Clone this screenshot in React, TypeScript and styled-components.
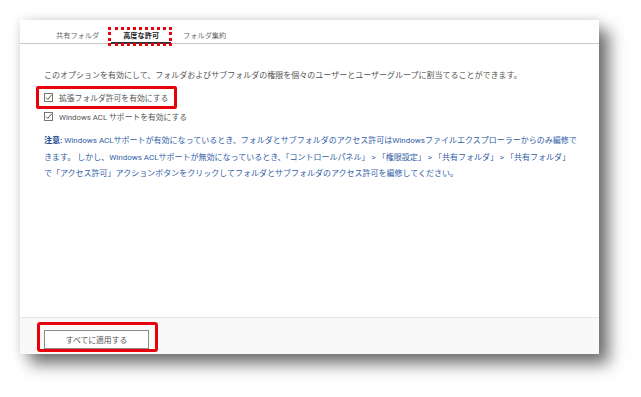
import React from "react";
import styled, { createGlobalStyle } from "styled-components";

const Global = createGlobalStyle`
  html, body { margin: 0; padding: 0; background: #ffffff; }
  body { font-family: Roboto, "Noto Sans CJK JP", "Liberation Sans", sans-serif; }
`;

const Page = styled.div`
  width: 641px;
  height: 397px;
  padding: 20px 0 0 20px;
  box-sizing: border-box;
  overflow: hidden;
`;

const Panel = styled.div`
  width: 579px;
  height: 334px;
  background: #ffffff;
  display: flex;
  flex-direction: column;
  box-shadow: 10px 10px 15px rgba(0, 0, 0, 0.55), 0 0 10px rgba(0, 0, 0, 0.12);
`;

const TabBar = styled.div`
  display: flex;
  height: 23px;
  padding-left: 24px;
  border-bottom: 1px solid #c8c8c8;
`;

const Tab = styled.div<{ $active?: boolean }>`
  position: relative;
  display: flex;
  align-items: flex-end;
  padding: 0 12px 1px;
  font-size: 7.2px;
  line-height: 10px;
  color: ${(p) => (p.$active ? "#222" : "#666")};
  font-weight: ${(p) => (p.$active ? 700 : 400)};
  border-bottom: ${(p) => (p.$active ? "2px solid #333" : "2px solid transparent")};
  margin-bottom: -1px;
  ${(p) =>
    p.$active &&
    `
    &::after {
      content: "";
      position: absolute;
      top: 7px;
      bottom: -4px;
      left: -3px;
      right: -1px;
      border: 3px dotted #e8000b;
    }
  `}
`;

const Content = styled.div`
  flex: 1;
  padding: 26px 24px 0;
  display: flex;
  flex-direction: column;
`;

const Description = styled.div`
  font-size: 8px;
  line-height: 12px;
  color: #555;
  margin-bottom: 6px;
  white-space: nowrap;
`;

const CheckRow = styled.div<{ $highlight?: boolean }>`
  position: relative;
  display: flex;
  align-items: center;
  gap: 6px;
  height: 19px;
  font-size: 7.8px;
  color: #555;
  ${(p) =>
    p.$highlight &&
    `
    &::before {
      content: "";
      position: absolute;
      left: -8px;
      top: -2px;
      width: 141px;
      height: 23px;
      box-sizing: border-box;
      border: 3px solid #e8000b;
      border-radius: 2px;
    }
  `}
`;

const Note = styled.div`
  margin-top: 7px;
  font-size: 8px;
  line-height: 16.5px;
  color: #2f5ea6;
  white-space: nowrap;
  b { font-weight: 700; color: #1f4a8f; }
`;

const Footer = styled.div`
  height: 37px;
  box-sizing: border-box;
  background: #f9f9f9;
  border-top: 1px solid #e6e6e6;
  padding: 10px 24px 0;
`;

const ApplyWrap = styled.div`
  position: relative;
  display: inline-block;
  &::before {
    content: "";
    position: absolute;
    left: -7px;
    top: -8px;
    right: -9px;
    bottom: -3px;
    border: 3px solid #e8000b;
    border-radius: 3px;
  }
`;

const ApplyButton = styled.button`
  display: block;
  width: 105px;
  height: 19px;
  padding: 0;
  background: #ffffff;
  border: 1px solid #8a8a8a;
  font-family: inherit;
  font-size: 7.8px;
  color: #555;
`;

const CheckIcon = () => (
  <svg width="9" height="9" viewBox="0 0 9 9">
    <rect x="0.5" y="0.5" width="8" height="8" fill="none" stroke="#777" strokeWidth="1" />
    <path d="M2 4.6 L3.8 6.4 L7.6 1.8" fill="none" stroke="#555" strokeWidth="1" />
  </svg>
);

export default function App() {
  return (
    <>
      <Global />
      <Page>
        <Panel>
          <TabBar>
            <Tab>共有フォルダ</Tab>
            <Tab $active>高度な許可</Tab>
            <Tab>フォルダ集約</Tab>
          </TabBar>
          <Content>
            <Description>
              このオプションを有効にして、フォルダおよびサブフォルダの権限を個々のユーザーとユーザーグループに割当てることができます。
            </Description>
            <CheckRow $highlight>
              <CheckIcon />
              拡張フォルダ許可を有効にする
            </CheckRow>
            <CheckRow>
              <CheckIcon />
              Windows ACL サポートを有効にする
            </CheckRow>
            <Note>
              <b>注意:</b> Windows ACLサポートが有効になっているとき、フォルダとサブフォルダのアクセス許可はWindowsファイルエクスプローラーからのみ編修で
              <br />
              きます。 しかし、Windows ACLサポートが無効になっているとき、「コントロールパネル」 &gt; 「権限設定」 &gt; 「共有フォルダ」 &gt; 「共有フォルダ」
              <br />
              で「アクセス許可」アクションボタンをクリックしてフォルダとサブフォルダのアクセス許可を編修してください。
            </Note>
          </Content>
          <Footer>
            <ApplyWrap>
              <ApplyButton>すべてに適用する</ApplyButton>
            </ApplyWrap>
          </Footer>
        </Panel>
      </Page>
    </>
  );
}
